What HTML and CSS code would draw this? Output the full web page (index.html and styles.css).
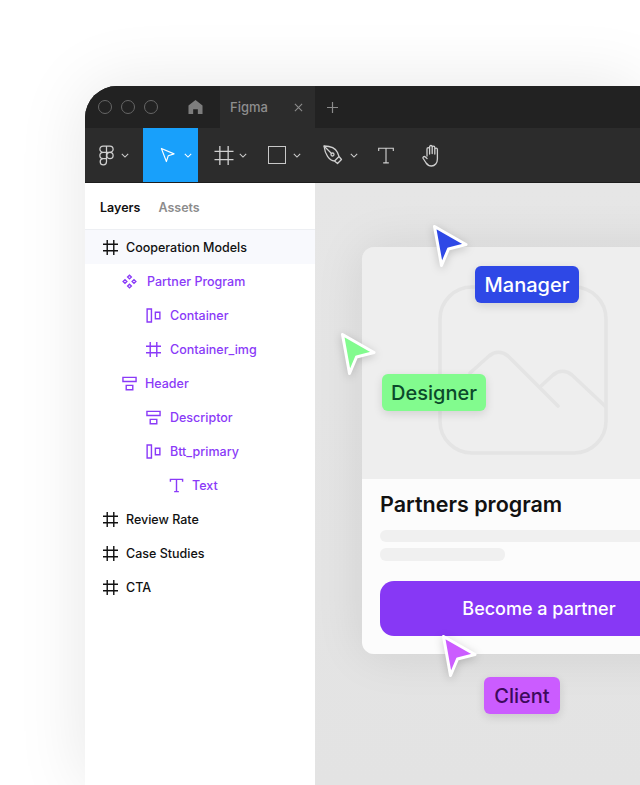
FILE: index.html
```html
<!DOCTYPE html>
<html lang="en">
<head>
  <meta charset="UTF-8" />
  <meta name="viewport" content="width=device-width, initial-scale=1.0"/>
  <title>Figma</title>
  <link rel="stylesheet" href="styles.css">
</head>
<body>
  <svg class="sprite" width="0" height="0">
    <symbol id="i-frame" viewBox="0 0 16 16">
      <path d="M4.5 0v16M11.5 0v16M0 4.5h16M0 11.5h16" fill="none" stroke="currentColor"/>
    </symbol>
    <symbol id="i-comp" viewBox="0 0 16 16">
      <g fill="none" stroke="currentColor" stroke-width="1.5">
        <path d="M8 1.2l2 2-2 2-2-2zM8 10.8l2 2-2 2-2-2zM3.2 6l2 2-2 2-2-2zM12.8 6l2 2-2 2-2-2z"/>
      </g>
    </symbol>
    <symbol id="i-col" viewBox="0 0 16 16">
      <path d="M1.2 1h4.600v14H1.2zM10 4.600h4.800v6.800H10z" fill="none" stroke="currentColor" stroke-width="1.5"/>
    </symbol>
    <symbol id="i-row" viewBox="0 0 16 16">
      <path d="M1 1.5h14v4.300H1zM4.5 10h7v4.600h-7z" fill="none" stroke="currentColor" stroke-width="1.5"/>
    </symbol>
    <symbol id="i-text" viewBox="0 0 16 16">
      <path d="M1.5 4V1.5h13V4M8 1.5v13M5.5 14.5h5" fill="none" stroke="currentColor"/>
    </symbol>
    <symbol id="i-chev" viewBox="0 0 10 6">
      <path d="M1 1l4 4 4-4" fill="none" stroke="currentColor" stroke-width="1.3"/>
    </symbol>
    <symbol id="i-cursor" viewBox="0 0 36 44">
      <path d="M2.5 2.5L34 20.5 16.5 25 9.5 41.5z" fill="currentColor" stroke="#fff" stroke-width="3" stroke-linejoin="round"/>
    </symbol>
  </svg>

  <div class="window">
    <div class="titlebar">
      <div class="lights"><span></span><span></span><span></span></div>
      <svg class="home" viewBox="0 0 16 16"><path d="M8 .5L15.5 6.5V15.5H10.5V10.5H5.5V15.5H.5V6.5z" fill="#7d7d7d"/></svg>
      <div class="tab">
        <span>Figma</span>
        <svg class="tab-x" viewBox="0 0 10 10"><path d="M1 1l8 8M9 1l-8 8" stroke="#8c8c8c" stroke-width="1.2"/></svg>
      </div>
      <svg class="plus" viewBox="0 0 11 11"><path d="M5.5 0v11M0 5.5h11" stroke="#8c8c8c" stroke-width="1.2"/></svg>
    </div>

    <div class="toolbar">
      <div class="tool tool-logo">
        <svg class="ic-logo" viewBox="0 0 14 20" fill="none" stroke="#d0d0d0" stroke-width="1.2">
          <path d="M7 1H3.700a3 3 0 0 0 0 6H7zM7 1h3.300a3 3 0 0 1 0 6H7zM7 7H3.700a3 3 0 0 0 0 6H7zM7 13H3.700a3 3 0 1 0 3.300 3z"/>
          <circle cx="10.3" cy="10" r="3"/>
        </svg>
        <svg class="chev"><use href="#i-chev"/></svg>
      </div>
      <div class="tool tool-move">
        <svg class="ic-arrow" viewBox="0 0 16 16"><path d="M1.5 1L15 6.800 8.800 8.800 6.800 15z" fill="none" stroke="#fff" stroke-width="1.2" stroke-linejoin="round"/></svg>
        <svg class="chev chev-light"><use href="#i-chev"/></svg>
      </div>
      <div class="tool tool-frame">
        <svg class="ic-frame"><use href="#i-frame"/></svg>
        <svg class="chev"><use href="#i-chev"/></svg>
      </div>
      <div class="tool tool-rect">
        <span class="ic-rect"></span>
        <svg class="chev"><use href="#i-chev"/></svg>
      </div>
      <div class="tool tool-pen">
        <svg class="ic-pen" viewBox="0 0 20 20" fill="none" stroke="#d0d0d0" stroke-width="1.3" stroke-linejoin="round">
          <path d="M1 1C7 1 12.5 3 14.5 7.5L16 11.5 18.5 14.5 14.5 18.5 11.5 16C6 15.5 2 9 1 1z"/><path d="M16 11.5L11.5 16M1 1l7.5 7.5"/><circle cx="9.5" cy="9.5" r="1.5"/>
        </svg>
        <svg class="chev"><use href="#i-chev"/></svg>
      </div>
      <svg class="ic-text"><use href="#i-text"/></svg>
      <svg class="ic-hand" viewBox="0 0 21 23" fill="none" stroke="#d0d0d0" stroke-width="1.3" stroke-linecap="round" stroke-linejoin="round">
        <path d="M5 12V5a1.300 1.300 0 0 1 2.600 0v5M7.600 9.500V2.800a1.300 1.300 0 0 1 2.600 0v6.700M10.200 9.500V3.500a1.300 1.300 0 0 1 2.600 0v6M12.800 10V5.500a1.300 1.300 0 0 1 2.600 0v9.500c0 4-2.500 7-6 7-2.600 0-4-1.200-5.300-3L1.200 14.500c-.8-1.400 1-2.700 2.200-1.500L5 14.500"/>
      </svg>
    </div>

    <div class="workspace">
      <aside class="sidebar">
        <div class="side-tabs">
          <span class="side-tab side-tab-on">Layers</span>
          <span class="side-tab">Assets</span>
        </div>
        <ul class="layers">
          <li class="layer layer-sel"><svg><use href="#i-frame"/></svg>Cooperation Models</li>
          <li class="layer lv1 violet"><svg><use href="#i-comp"/></svg>Partner Program</li>
          <li class="layer lv2 violet"><svg><use href="#i-col"/></svg>Container</li>
          <li class="layer lv2 violet"><svg><use href="#i-frame"/></svg>Container_img</li>
          <li class="layer lv1 lv1-tight violet"><svg><use href="#i-row"/></svg>Header</li>
          <li class="layer lv2 violet"><svg><use href="#i-row"/></svg>Descriptor</li>
          <li class="layer lv2 violet"><svg><use href="#i-col"/></svg>Btt_primary</li>
          <li class="layer lv3 violet"><svg><use href="#i-text"/></svg>Text</li>
          <li class="layer"><svg><use href="#i-frame"/></svg>Review Rate</li>
          <li class="layer"><svg><use href="#i-frame"/></svg>Case Studies</li>
          <li class="layer"><svg><use href="#i-frame"/></svg>CTA</li>
        </ul>
      </aside>

      <main class="canvas">
        <div class="card">
          <div class="card-img">
            <svg class="placeholder" viewBox="0 0 170 170" fill="none" stroke="#e4e4e4" stroke-width="3.6" stroke-linecap="round">
              <rect x="2" y="2" width="166" height="166" rx="32"/>
              <path d="M32 88l19-17c6-5 13-5 19 0l50 50M103 101l12-11c6-5 13-5 19 0l33 31"/>
            </svg>
          </div>
          <div class="card-body">
            <h2 class="card-title">Partners program</h2>
            <div class="skel"></div>
            <div class="skel skel-short"></div>
            <button class="card-btn">Become a partner</button>
          </div>
        </div>
      </main>
    </div>

    <svg class="cursor cursor-manager"><use href="#i-cursor"/></svg>
    <span class="tag tag-manager">Manager</span>
    <svg class="cursor cursor-designer"><use href="#i-cursor"/></svg>
    <span class="tag tag-designer">Designer</span>
    <svg class="cursor cursor-client"><use href="#i-cursor"/></svg>
    <span class="tag tag-client">Client</span>
  </div>
</body>
</html>
```
FILE: styles.css
```css
html, body {
  margin: 0;
  height: 785px;
  overflow: hidden;
  background: #fff;
}

body {
  font-family: 'Inter', 'Liberation Sans', sans-serif;
  padding: 86px 0 0 85px;
  box-sizing: border-box;
}

.sprite {
  position: absolute;
}

.window {
  position: relative;
  width: 555px;
  height: 699px;
  border-top-left-radius: 32px;
  background: #222;
  box-shadow: 0 0 70px rgba(0, 0, 0, 0.1);
}

.titlebar {
  display: flex;
  align-items: center;
  height: 42px;
  background: #222;
  border-top-left-radius: 32px;
}

.lights {
  display: flex;
  gap: 9px;
  margin-left: 13px;
}

.lights span {
  width: 12px;
  height: 12px;
  border: 1px solid #666;
  border-radius: 50%;
}

.home {
  width: 15px;
  height: 16px;
  margin-left: 30px;
}

.tab {
  display: flex;
  align-items: center;
  justify-content: space-between;
  box-sizing: border-box;
  width: 95px;
  height: 42px;
  margin-left: 17px;
  padding: 0 12px 0 10px;
  background: #2c2c2c;
  color: #8e8e8e;
  font-size: 13px;
  font-weight: 500;
}

.tab-x {
  width: 9px;
  height: 9px;
}

.plus {
  width: 11px;
  height: 11px;
  margin-left: 12px;
}

.toolbar {
  display: flex;
  align-items: center;
  height: 54px;
  background: #2c2c2c;
  border-bottom: 1px solid #1d1d1d;
  color: #d0d0d0;
}

.tool {
  display: flex;
  align-items: center;
  height: 100%;
}

.chev {
  width: 8px;
  height: 5px;
  color: #cfcfcf;
}

.chev-light {
  color: #fff;
}

.tool-logo {
  width: 58px;
  padding-left: 14px;
  box-sizing: border-box;
}

.ic-logo {
  width: 15px;
  height: 21px;
  margin-right: 7px;
}

.tool-move {
  width: 55px;
  padding-left: 17px;
  box-sizing: border-box;
  background: #18a0fb;
}

.ic-arrow {
  width: 15px;
  height: 16px;
  margin-right: 9px;
}

.tool-frame {
  margin-left: 16px;
}

.ic-frame {
  width: 20px;
  height: 19px;
  margin-right: 5px;
  stroke-width: 1.1;
}

.tool-rect {
  margin-left: 21px;
}

.ic-rect {
  width: 16px;
  height: 16px;
  border: 1.5px solid #c8c8c8;
  margin-right: 7px;
}

.tool-pen {
  margin-left: 22px;
}

.ic-pen {
  width: 20px;
  height: 20px;
  margin-right: 7px;
}

.ic-text {
  width: 18px;
  height: 21px;
  margin-left: 19px;
  stroke-width: 1;
}

.ic-hand {
  width: 21px;
  height: 23px;
  margin-left: 27px;
}

.workspace {
  display: flex;
  height: 603px;
}

.sidebar {
  flex: 0 0 230px;
  background: #fff;
}

.side-tabs {
  display: flex;
  gap: 18px;
  align-items: center;
  box-sizing: border-box;
  height: 47px;
  padding: 2px 0 0 15px;
  border-bottom: 1px solid #edeff3;
  font-size: 12.5px;
  font-weight: 600;
  color: #8c8c8c;
}

.side-tab-on {
  color: #111;
}

.layers {
  list-style: none;
  margin: 0;
  padding: 0;
}

.layer {
  display: flex;
  align-items: center;
  height: 34px;
  padding-left: 18px;
  font-size: 12.5px;
  font-weight: 550;
  color: #111;
}

.layer svg {
  width: 15px;
  height: 15px;
  margin-right: 8px;
  stroke-width: 1.5;
  flex: none;
}

.layer-sel {
  background: #f8f9fd;
}

.violet {
  color: #8a3af8;
}

.lv1 {
  padding-left: 37px;
}

.lv1 svg {
  margin-right: 10px;
}

.lv1-tight svg {
  margin-right: 8px;
}

.lv2 {
  padding-left: 61px;
}

.lv2 svg {
  margin-right: 9px;
}

.lv3 {
  padding-left: 84px;
}

.lv3 svg {
  margin-right: 8px;
}

.canvas {
  flex: 1;
  overflow: hidden;
  padding: 64px 0 0 47px;
  background: linear-gradient(#e6e6e6, #e3e3e3);
}

.card {
  width: 354px;
  border-radius: 12px;
  overflow: hidden;
  box-shadow: 0 0 50px rgba(0, 0, 0, 0.09);
}

.card-img {
  display: flex;
  justify-content: center;
  box-sizing: border-box;
  height: 232px;
  padding: 38px 32px 0 0;
  background: #eee;
}

.placeholder {
  width: 170px;
  height: 170px;
}

.card-body {
  padding: 12px 18px 18px;
  background: #fcfcfc;
}

.card-title {
  margin: 0 0 13px;
  font-size: 21.5px;
  line-height: 26px;
  font-weight: 600;
  color: #111;
}

.skel {
  height: 12px;
  border-radius: 6px;
  background: #f0f0f0;
  margin-bottom: 6px;
}

.skel-short {
  width: 125px;
  height: 13px;
  margin-bottom: 20px;
}

.card-btn {
  display: block;
  width: 100%;
  height: 55px;
  border: none;
  border-radius: 14px;
  background: #8738f5;
  color: #fff;
  font-family: inherit;
  font-size: 18px;
  font-weight: 450;
}

.cursor {
  position: absolute;
  width: 36px;
  height: 44px;
  filter: drop-shadow(0 2px 4px rgba(0, 0, 0, 0.18));
}

.cursor-manager {
  left: 347px;
  top: 138px;
  color: #2e48e6;
}

.cursor-designer {
  left: 255px;
  top: 246px;
  color: #82fb8e;
}

.cursor-client {
  left: 356px;
  top: 548px;
  color: #cb5cff;
}

.tag {
  position: absolute;
  display: flex;
  align-items: center;
  justify-content: center;
  height: 37px;
  border-radius: 6px;
  font-size: 20px;
  font-weight: 450;
  box-shadow: 0 3px 10px rgba(0, 0, 0, 0.12);
}

.tag-manager {
  left: 390px;
  top: 180px;
  width: 104px;
  background: #2e48e6;
  color: #fff;
}

.tag-designer {
  left: 297px;
  top: 288px;
  width: 104px;
  background: #82fb8e;
  color: #0b4a2b;
}

.tag-client {
  left: 399px;
  top: 591px;
  width: 76px;
  background: #cb5cff;
  color: #3d0a5c;
}
```
